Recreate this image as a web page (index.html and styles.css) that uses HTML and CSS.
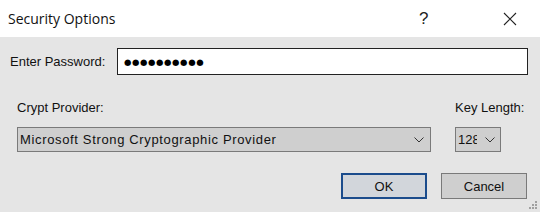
FILE: index.html
```html
<!DOCTYPE html>
<html>
<head>
<meta charset="utf-8">
<link rel="stylesheet" href="styles.css">
</head>
<body>
<div class="dialog">
  <div class="titlebar">
    <span class="title">Security Options</span>
    <span class="help">?</span>
    <span class="close">
      <svg width="14" height="14" viewBox="0 0 14 14"><path d="M1 1 L13 13 M13 1 L1 13" stroke="#222" stroke-width="1.1" fill="none"/></svg>
    </span>
  </div>
  <div class="content">
    <div class="pwrow">
      <span class="label">Enter Password:</span>
      <div class="input">●●●●●●●●●●</div>
    </div>
    <div class="selrow">
      <div class="col provider">
        <span class="label">Crypt Provider:</span>
        <div class="select wide">
          <span class="val">Microsoft Strong Cryptographic Provider</span>
          <svg class="chev" width="10" height="6" viewBox="0 0 10 6"><path d="M0.5 0.5 L5 5 L9.5 0.5" stroke="#333" stroke-width="1" fill="none"/></svg>
        </div>
      </div>
      <div class="col key">
        <span class="label">Key Length:</span>
        <div class="select small">
          <span class="val clip">128</span>
          <svg class="chev" width="10" height="6" viewBox="0 0 10 6"><path d="M0.5 0.5 L5 5 L9.5 0.5" stroke="#333" stroke-width="1" fill="none"/></svg>
        </div>
      </div>
    </div>
    <div class="btnrow">
      <div class="btn ok">OK</div>
      <div class="btn">Cancel</div>
    </div>
    <svg class="grip" width="10" height="10" viewBox="0 0 10 10">
      <rect x="7" y="1" width="2" height="2" fill="#a0a0a0"/>
      <rect x="4" y="4" width="2" height="2" fill="#a0a0a0"/>
      <rect x="7" y="4" width="2" height="2" fill="#a0a0a0"/>
      <rect x="1" y="7" width="2" height="2" fill="#a0a0a0"/>
      <rect x="4" y="7" width="2" height="2" fill="#a0a0a0"/>
      <rect x="7" y="7" width="2" height="2" fill="#a0a0a0"/>
    </svg>
  </div>
</div>
</body>
</html>
```
FILE: styles.css
```css
html, body {
  margin: 0;
  padding: 0;
}
body {
  width: 540px;
  height: 212px;
  overflow: hidden;
  font-family: "Liberation Sans", Arial, sans-serif;
  font-size: 13px;
  color: #111;
}
.dialog {
  display: flex;
  flex-direction: column;
  width: 540px;
  height: 212px;
}
.titlebar {
  height: 37px;
  background: #ffffff;
  display: flex;
  align-items: center;
  padding-left: 8px;
  box-sizing: border-box;
}
.title {
  font-family: "Open Sans", "Noto Sans", sans-serif;
  font-size: 14px;
  color: #111;
  flex: 1;
}
.help {
  font-family: "Liberation Sans", sans-serif;
  font-size: 17px;
  color: #222;
  width: 12px;
  margin-right: 72px;
}
.close {
  display: flex;
  width: 14px;
  height: 14px;
  margin-right: 23px;
}
.content {
  flex: 1;
  background: #e5e5e5;
  position: relative;
  display: flex;
  flex-direction: column;
}
.pwrow {
  display: flex;
  align-items: center;
  margin-top: 11px;
  padding-left: 10px;
}
.pwrow .label {
  width: 107px;
}
.input {
  width: 411px;
  height: 27px;
  box-sizing: border-box;
  border: 1px solid #222;
  background: #fff;
  display: flex;
  align-items: center;
  padding-left: 6px;
  font-family: "DejaVu Sans", sans-serif;
  font-size: 8.5px;
  letter-spacing: 0.6px;
  color: #000;
}
.selrow {
  display: flex;
  margin-top: 25px;
  padding-left: 17px;
  gap: 24px;
}
.col {
  display: flex;
  flex-direction: column;
}
.col .label {
  height: 16px;
  line-height: 16px;
  margin-bottom: 11px;
}
.key .label {
  white-space: nowrap;
}
.select {
  height: 25px;
  box-sizing: border-box;
  border: 1px solid #7a7a7a;
  background: #cfcfcf;
  display: flex;
  align-items: center;
  padding-left: 2px;
}
.wide {
  width: 414px;
}
.wide .val {
  letter-spacing: 0.65px;
}
.small {
  width: 46px;
}
.val {
  flex: 1;
  white-space: nowrap;
}
.clip {
  flex: none;
  width: 19px;
  overflow: hidden;
  margin-right: 8px;
}
.chev {
  flex-shrink: 0;
  margin-right: 6px;
}
.btnrow {
  display: flex;
  justify-content: flex-end;
  gap: 14px;
  margin-top: 21px;
  padding-right: 13px;
}
.btn {
  width: 86px;
  height: 26px;
  box-sizing: border-box;
  border: 1px solid #7a7a7a;
  background: #cfcfcf;
  display: flex;
  align-items: center;
  justify-content: center;
}
.btn.ok {
  border: 2px solid #1b4c8c;
  background: #d2d6db;
}
.grip {
  position: absolute;
  right: 2px;
  bottom: 2px;
}
```
